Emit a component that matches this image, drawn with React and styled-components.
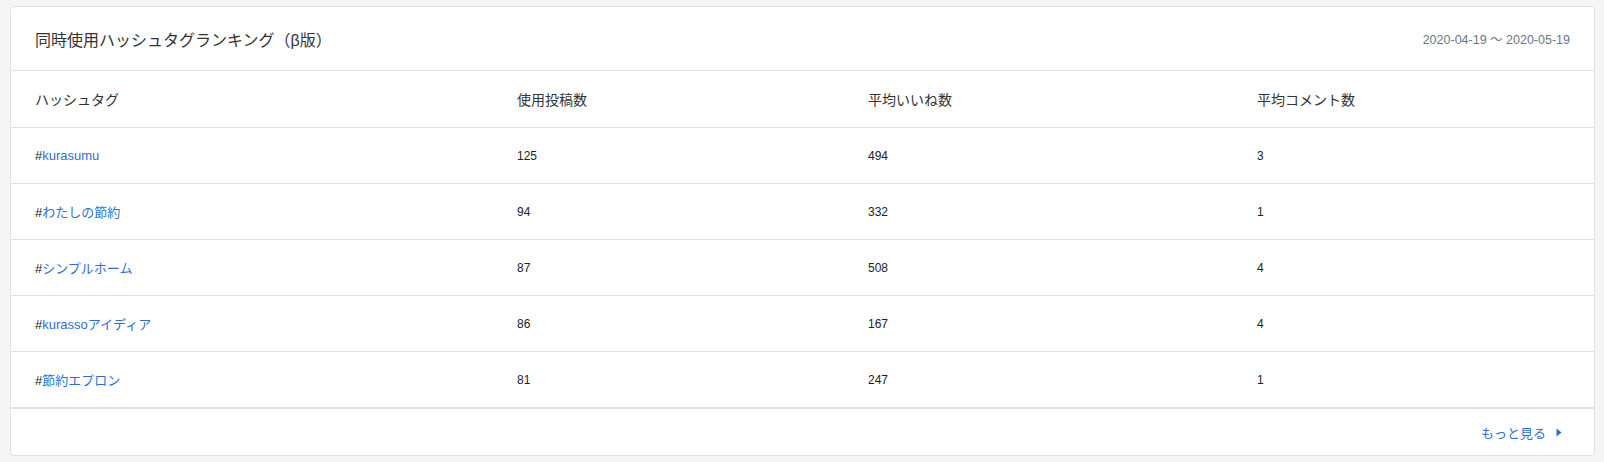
import React from 'react';
import styled, { createGlobalStyle } from 'styled-components';

const GlobalStyle = createGlobalStyle`
    body {
        margin: 0;
        background-color: #f5f5f5;
        font-family: "Liberation Sans", Arial, "Noto Sans CJK JP", sans-serif;
        color: #222;
    }
`;

const Page = styled.div`
    padding: 6px 9px 6px 10px;
`;

const Card = styled.div`
    background-color: #fff;
    border: 1px solid #e0e0e0;
    border-radius: 4px;
`;

const CardHeader = styled.div`
    display: flex;
    align-items: center;
    justify-content: space-between;
    height: 63px;
    padding: 0 24px;
    border-bottom: 1px solid #e0e0e0;
`;

const Title = styled.h2`
    margin: 0;
    font-size: 16px;
    font-weight: normal;
    color: #333;
`;

const Period = styled.span`
    font-size: 12.5px;
    color: #6b7785;
`;

const Table = styled.table`
    width: 100%;
    border-collapse: separate;
    border-spacing: 0;
    table-layout: fixed;
`;

const Th = styled.th`
    box-sizing: border-box;
    height: 57px;
    padding: 0 24px;
    text-align: left;
    font-size: 14px;
    font-weight: normal;
    color: #333;
    border-bottom: 1px solid #e0e0e0;
`;

const Td = styled.td`
    box-sizing: border-box;
    height: ${(props) => (props.$last ? '57px' : '56px')};
    padding: 0 24px;
    font-size: ${(props) => (props.$tag ? '13px' : '12px')};
    color: #222;
    border-bottom: ${(props) => (props.$last ? '2px solid #dee2e6' : '1px solid #e0e0e0')};
`;

const TagLink = styled.a`
    color: #2a6fd6;
    text-decoration: none;
`;

const Footer = styled.div`
    display: flex;
    justify-content: flex-end;
    align-items: center;
    height: 46px;
    padding: 0 32px;
`;

const MoreLink = styled.a`
    display: flex;
    align-items: center;
    gap: 10px;
    font-size: 13px;
    color: #2a6fd6;
    text-decoration: none;
`;

const rows = [
    { tag: 'kurasumu', posts: 125, likes: 494, comments: 3 },
    { tag: 'わたしの節約', posts: 94, likes: 332, comments: 1 },
    { tag: 'シンプルホーム', posts: 87, likes: 508, comments: 4 },
    { tag: 'kurassoアイディア', posts: 86, likes: 167, comments: 4 },
    { tag: '節約エプロン', posts: 81, likes: 247, comments: 1 },
];

const App = () => {
    return (
        <Page>
            <GlobalStyle />
            <Card>
                <CardHeader>
                    <Title>同時使用ハッシュタグランキング（β版）</Title>
                    <Period>2020-04-19 ～ 2020-05-19</Period>
                </CardHeader>
                <Table>
                    <colgroup>
                        <col style={{ width: '482px' }} />
                        <col style={{ width: '351px' }} />
                        <col style={{ width: '389px' }} />
                        <col />
                    </colgroup>
                    <thead>
                        <tr>
                            <Th>ハッシュタグ</Th>
                            <Th>使用投稿数</Th>
                            <Th>平均いいね数</Th>
                            <Th>平均コメント数</Th>
                        </tr>
                    </thead>
                    <tbody>
                        {rows.map((row, i) => {
                            const last = i === rows.length - 1;
                            return (
                                <tr key={row.tag}>
                                    <Td $tag $last={last}>
                                        #<TagLink href="#">{row.tag}</TagLink>
                                    </Td>
                                    <Td $last={last}>{row.posts}</Td>
                                    <Td $last={last}>{row.likes}</Td>
                                    <Td $last={last}>{row.comments}</Td>
                                </tr>
                            );
                        })}
                    </tbody>
                </Table>
                <Footer>
                    <MoreLink href="#">
                        もっと見る
                        <svg width="6" height="9" viewBox="0 0 6 9">
                            <path d="M0.5 0.5 L5.5 4.5 L0.5 8.5 Z" fill="#2a6fd6" />
                        </svg>
                    </MoreLink>
                </Footer>
            </Card>
        </Page>
    );
};

export default App;
